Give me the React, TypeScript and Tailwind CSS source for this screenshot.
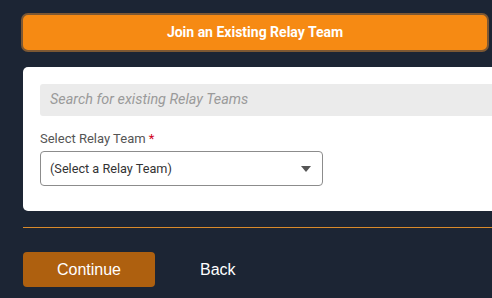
export default function App() {
  return (
    <div className="w-[492px] h-[298px] overflow-hidden bg-[#1c2534] pt-[13px] font-['Roboto',sans-serif]">
      <button
        type="button"
        className="ml-[21px] w-[468px] h-[39px] rounded-[7px] border-2 border-[#7d5833] bg-[#f68a13] text-white text-[14px] font-bold flex items-center justify-center"
      >
        Join an Existing Relay Team
      </button>

      <div className="ml-[23px] mt-[15px] w-[480px] h-[144px] bg-white rounded-l-[5px] pt-[17px] pl-[17px]">
        <div className="h-[32px] bg-[#ebebeb] rounded-l-[3px] flex items-center pl-[10px] text-[14.4px] italic text-[#9a9a9a]">
          Search for existing Relay Teams
        </div>
        <div className="mt-[15px] text-[13px] text-[#555] leading-[16px]">
          Select Relay Team <span className="text-[#d0021b]">*</span>
        </div>
        <div className="mt-[4px] w-[283px] h-[35px] border border-[#8c8c8c] rounded-[4px] flex items-center justify-between pl-[9px] pr-[11px] text-[12.7px] text-[#333]">
          <span>(Select a Relay Team)</span>
          <svg width="10" height="6" viewBox="0 0 10 6" className="text-[#555]">
            <path d="M0 0 H10 L5 6 Z" fill="currentColor" />
          </svg>
        </div>
      </div>

      <div className="ml-[23px] mt-[16px] h-px bg-[#d98a2b]" />

      <div className="ml-[23px] mt-[24px] flex items-center font-['Liberation_Sans',sans-serif]">
        <button
          type="button"
          className="w-[132px] h-[35px] rounded-[4px] bg-[#ae600f] text-white text-[16px]"
        >
          Continue
        </button>
        <button type="button" className="ml-[45px] text-white text-[16px]">
          Back
        </button>
      </div>
    </div>
  )
}
